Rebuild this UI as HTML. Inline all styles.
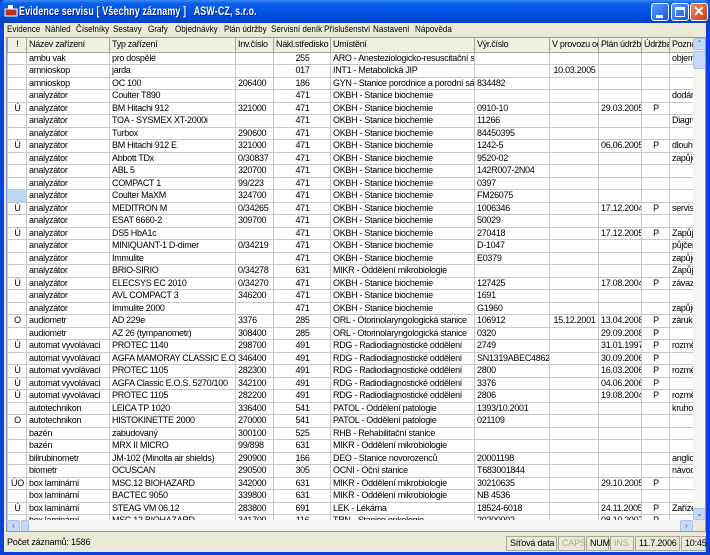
<!DOCTYPE html>
<html><head><meta charset="utf-8">
<style>
*{margin:0;padding:0;box-sizing:border-box}
body{width:710px;height:555px;overflow:hidden;background:#0842d8;font-family:"Liberation Sans",sans-serif;font-size:9px;color:#000;position:relative}
.title{position:absolute;left:0;top:0;width:710px;height:23px;background:linear-gradient(#3a8cf8 0%,#0a5fe8 15%,#0055e5 50%,#0048d0 85%,#0a3fb8 100%);border-radius:6px 6px 0 0}
.title .t{position:absolute;left:19px;top:4px;color:#fff;font-weight:bold;font-size:12px;letter-spacing:0.2px;text-shadow:1px 1px #0a1e80;white-space:pre;transform:scaleX(0.74);transform-origin:left}
.ico{position:absolute;left:4px;top:4px;width:15px;height:14px}
.btn{position:absolute;top:3px;width:18px;height:18px;border:1px solid #fff;border-radius:3px;background:linear-gradient(135deg,#5c9cfc,#1858e0)}
.btn.x{background:linear-gradient(135deg,#e88a6a,#c43c12)}
.frame{position:absolute;left:4px;top:23px;width:702px;height:529px;background:#ece9d8}
.menu{position:absolute;left:0;top:0;height:13px;white-space:nowrap;font-size:9.5px;line-height:13px}
.menu span{position:absolute;top:0;transform:scaleX(0.85);transform-origin:left}
.grid{position:absolute;left:2px;top:14px;width:700px;height:495px;border:1px solid #7f9db9;background:#fff;overflow:hidden}
table{position:absolute;left:0;top:0;border-collapse:collapse;table-layout:fixed;width:686px}
tr{height:12.5px}
td,th{border:1px solid #c8c8c8;height:12.5px;padding:0 1px 0 2px;white-space:nowrap;overflow:hidden;font-weight:normal;text-align:left;font-size:9px;letter-spacing:-0.3px;line-height:11px}
th{height:14px;background:#f1efe2;border-color:#aca899;border-top:none}
tr:first-child{height:14px}
.c{text-align:center}
.sel{background:#b8d8f4}
.vs{position:absolute;left:686px;top:0;width:13px;height:482px;background:#f4f4f0}
.hs{position:absolute;left:0;top:482px;width:686px;height:12px;background:#f4f4f0}
.arr{position:absolute;width:13px;height:12px;background:#c6d8fc;border:1px solid #a8c0f0;border-radius:2px;color:#4d6185;font-size:8px;text-align:center;line-height:10px}
.status{position:absolute;left:0;top:511px;width:702px;height:18px}
.status div{position:absolute;top:2px;height:15px;border:1px solid #aca899;line-height:13px;font-size:9px;letter-spacing:-0.2px;padding:0 3px;white-space:nowrap}
.g{color:#aca899}
</style></head><body>
<div class="title">
<svg class="ico" viewBox="0 0 15 14"><rect x="1" y="5" width="12" height="7" fill="#c03020" stroke="#fff" stroke-width="1"/><rect x="4" y="1" width="5" height="4" fill="#fff"/></svg>
<div class="t">Evidence servisu [ Všechny záznamy ]   ASW-CZ, s.r.o.</div>
<div class="btn" style="left:651px"><div style="position:absolute;left:4px;top:11px;width:7px;height:3px;background:#fff"></div></div>
<div class="btn" style="left:671px"><div style="position:absolute;left:3px;top:3px;width:10px;height:10px;border:1px solid #fff;border-top:3px solid #fff"></div></div>
<div class="btn x" style="left:690px"><div style="position:absolute;left:2px;top:-1px;color:#fff;font-weight:bold;font-size:14px">✕</div></div>
</div>
<div class="frame">
<div class="menu">
<span style="left:3px">Evidence</span><span style="left:41px">Náhled</span><span style="left:72px">Číselníky</span><span style="left:109px">Sestavy</span><span style="left:144px">Grafy</span><span style="left:171px">Objednávky</span><span style="left:220px">Plán údržby</span><span style="left:267px">Servisní deník</span><span style="left:320px">Příslušenství</span><span style="left:369px">Nastavení</span><span style="left:411px">Nápověda</span>
</div>
<div class="grid">
<table>
<colgroup><col style="width:19px"><col style="width:83px"><col style="width:126px"><col style="width:38px"><col style="width:57px"><col style="width:144px"><col style="width:75px"><col style="width:49px"><col style="width:43px"><col style="width:28px"><col style="width:24px"></colgroup>
<tr><th class="c">!</th><th>Název zařízení</th><th>Typ zařízení</th><th>Inv.číslo</th><th>Nákl.středisko</th><th>Umístění</th><th>Výr.číslo</th><th>V provozu od</th><th>Plán údržby</th><th>Údržba</th><th>Poznámka</th></tr>
<tr><td></td><td>ambu vak</td><td>pro dospělé</td><td></td><td class="c">255</td><td>ARO - Anesteziologicko-resuscitační stan</td><td></td><td></td><td></td><td></td><td>objem</td></tr>
<tr><td></td><td>amnioskop</td><td>jarda</td><td></td><td class="c">017</td><td>INT1 - Metabolická JIP</td><td></td><td class="c">10.03.2005</td><td></td><td></td><td></td></tr>
<tr><td></td><td>amnioskop</td><td>OC 100</td><td>206400</td><td class="c">186</td><td>GYN - Stanice porodnice a porodní sál</td><td>834482</td><td></td><td></td><td></td><td></td></tr>
<tr><td></td><td>analyzátor</td><td>Coulter T890</td><td></td><td class="c">471</td><td>OKBH - Stanice biochemie</td><td></td><td></td><td></td><td></td><td>dodán</td></tr>
<tr><td class="c">Ú</td><td>analyzátor</td><td>BM Hitachi 912</td><td>321000</td><td class="c">471</td><td>OKBH - Stanice biochemie</td><td>0910-10</td><td></td><td class="c">29.03.2005</td><td class="c">P</td><td></td></tr>
<tr><td></td><td>analyzátor</td><td>TOA - SYSMEX XT-2000i</td><td></td><td class="c">471</td><td>OKBH - Stanice biochemie</td><td>11266</td><td></td><td></td><td></td><td>Diagn</td></tr>
<tr><td></td><td>analyzátor</td><td>Turbox</td><td>290600</td><td class="c">471</td><td>OKBH - Stanice biochemie</td><td>84450395</td><td></td><td></td><td></td><td></td></tr>
<tr><td class="c">Ú</td><td>analyzátor</td><td>BM Hitachi 912 E</td><td>321000</td><td class="c">471</td><td>OKBH - Stanice biochemie</td><td>1242-5</td><td></td><td class="c">06.06.2005</td><td class="c">P</td><td>dlouho</td></tr>
<tr><td></td><td>analyzátor</td><td>Abbott TDx</td><td>0/30837</td><td class="c">471</td><td>OKBH - Stanice biochemie</td><td>9520-02</td><td></td><td></td><td></td><td>zapůjč</td></tr>
<tr><td></td><td>analyzátor</td><td>ABL 5</td><td>320700</td><td class="c">471</td><td>OKBH - Stanice biochemie</td><td>142R007-2N04</td><td></td><td></td><td></td><td></td></tr>
<tr><td></td><td>analyzátor</td><td>COMPACT 1</td><td>99/223</td><td class="c">471</td><td>OKBH - Stanice biochemie</td><td>0397</td><td></td><td></td><td></td><td></td></tr>
<tr><td class="sel"></td><td>analyzátor</td><td>Coulter MaXM</td><td>324700</td><td class="c">471</td><td>OKBH - Stanice biochemie</td><td>FM26075</td><td></td><td></td><td></td><td></td></tr>
<tr><td class="c">Ú</td><td>analyzátor</td><td>MEDITRON M</td><td>0/34265</td><td class="c">471</td><td>OKBH - Stanice biochemie</td><td>1006346</td><td></td><td class="c">17.12.2004</td><td class="c">P</td><td>servis</td></tr>
<tr><td></td><td>analyzátor</td><td>ESAT 6660-2</td><td>309700</td><td class="c">471</td><td>OKBH - Stanice biochemie</td><td>50029</td><td></td><td></td><td></td><td></td></tr>
<tr><td class="c">Ú</td><td>analyzátor</td><td>DS5 HbA1c</td><td></td><td class="c">471</td><td>OKBH - Stanice biochemie</td><td>270418</td><td></td><td class="c">17.12.2005</td><td class="c">P</td><td>Zapůjč</td></tr>
<tr><td></td><td>analyzátor</td><td>MINIQUANT-1 D-dimer</td><td>0/34219</td><td class="c">471</td><td>OKBH - Stanice biochemie</td><td>D-1047</td><td></td><td></td><td></td><td>půjčen</td></tr>
<tr><td></td><td>analyzátor</td><td>Immulite</td><td></td><td class="c">471</td><td>OKBH - Stanice biochemie</td><td>E0379</td><td></td><td></td><td></td><td>zapůjč</td></tr>
<tr><td></td><td>analyzátor</td><td>BRIO-SIRIO</td><td>0/34278</td><td class="c">631</td><td>MIKR - Oddělení mikrobiologie</td><td></td><td></td><td></td><td></td><td>Zapůjč</td></tr>
<tr><td class="c">Ú</td><td>analyzátor</td><td>ELECSYS EC 2010</td><td>0/34270</td><td class="c">471</td><td>OKBH - Stanice biochemie</td><td>127425</td><td></td><td class="c">17.08.2004</td><td class="c">P</td><td>závaz</td></tr>
<tr><td></td><td>analyzátor</td><td>AVL COMPACT 3</td><td>346200</td><td class="c">471</td><td>OKBH - Stanice biochemie</td><td>1691</td><td></td><td></td><td></td><td></td></tr>
<tr><td></td><td>analyzátor</td><td>Immulite 2000</td><td></td><td class="c">471</td><td>OKBH - Stanice biochemie</td><td>G1960</td><td></td><td></td><td></td><td>zapůjč</td></tr>
<tr><td class="c">O</td><td>audiometr</td><td>AD 229e</td><td>3376</td><td class="c">285</td><td>ORL - Otorinolaryngologická stanice</td><td>106912</td><td class="c">15.12.2001</td><td class="c">13.04.2008</td><td class="c">P</td><td>záruka</td></tr>
<tr><td></td><td>audiometr</td><td>AZ 26 (tympanometr)</td><td>308400</td><td class="c">285</td><td>ORL - Otorinolaryngologická stanice</td><td>0320</td><td></td><td class="c">29.09.2008</td><td class="c">P</td><td></td></tr>
<tr><td class="c">Ú</td><td>automat vyvolávací</td><td>PROTEC 1140</td><td>298700</td><td class="c">491</td><td>RDG - Radiodiagnostické oddělení</td><td>2749</td><td></td><td class="c">31.01.1997</td><td class="c">P</td><td>rozmě</td></tr>
<tr><td></td><td>automat vyvolávací</td><td>AGFA MAMORAY CLASSIC E.O.S</td><td>346400</td><td class="c">491</td><td>RDG - Radiodiagnostické oddělení</td><td>SN1319ABEC48621</td><td></td><td class="c">30.09.2006</td><td class="c">P</td><td></td></tr>
<tr><td class="c">Ú</td><td>automat vyvolávací</td><td>PROTEC 1105</td><td>282300</td><td class="c">491</td><td>RDG - Radiodiagnostické oddělení</td><td>2800</td><td></td><td class="c">16.03.2006</td><td class="c">P</td><td>rozmě</td></tr>
<tr><td class="c">Ú</td><td>automat vyvolávací</td><td>AGFA Classic E.O.S. 5270/100</td><td>342100</td><td class="c">491</td><td>RDG - Radiodiagnostické oddělení</td><td>3376</td><td></td><td class="c">04.06.2006</td><td class="c">P</td><td></td></tr>
<tr><td class="c">Ú</td><td>automat vyvolávací</td><td>PROTEC 1105</td><td>282200</td><td class="c">491</td><td>RDG - Radiodiagnostické oddělení</td><td>2806</td><td></td><td class="c">19.08.2004</td><td class="c">P</td><td>rozmě</td></tr>
<tr><td></td><td>autotechnikon</td><td>LEICA TP 1020</td><td>336400</td><td class="c">541</td><td>PATOL - Oddělení patologie</td><td>1393/10.2001</td><td></td><td></td><td></td><td>kruhov</td></tr>
<tr><td class="c">O</td><td>autotechnikon</td><td>HISTOKINETTE 2000</td><td>270000</td><td class="c">541</td><td>PATOL - Oddělení patologie</td><td>021109</td><td></td><td></td><td></td><td></td></tr>
<tr><td></td><td>bazén</td><td>zabudovaný</td><td>300100</td><td class="c">525</td><td>RHB - Rehabilitační stanice</td><td></td><td></td><td></td><td></td><td></td></tr>
<tr><td></td><td>bazén</td><td>MRX II MICRO</td><td>99/898</td><td class="c">631</td><td>MIKR - Oddělení mikrobiologie</td><td></td><td></td><td></td><td></td><td></td></tr>
<tr><td></td><td>bilirubinometr</td><td>JM-102 (Minolta air shields)</td><td>290900</td><td class="c">166</td><td>DEO - Stanice novorozenců</td><td>20001198</td><td></td><td></td><td></td><td>anglic</td></tr>
<tr><td></td><td>biometr</td><td>OCUSCAN</td><td>290500</td><td class="c">305</td><td>OCNI - Oční stanice</td><td>T683001844</td><td></td><td></td><td></td><td>návod</td></tr>
<tr><td class="c">ÚO</td><td>box laminární</td><td>MSC.12 BIOHAZARD</td><td>342000</td><td class="c">631</td><td>MIKR - Oddělení mikrobiologie</td><td>30210635</td><td></td><td class="c">29.10.2005</td><td class="c">P</td><td></td></tr>
<tr><td></td><td>box laminární</td><td>BACTEC 9050</td><td>339800</td><td class="c">631</td><td>MIKR - Oddělení mikrobiologie</td><td>NB 4536</td><td></td><td></td><td></td><td></td></tr>
<tr><td class="c">Ú</td><td>box laminární</td><td>STEAG VM 06.12</td><td>283800</td><td class="c">691</td><td>LEK - Lékárna</td><td>18524-6018</td><td></td><td class="c">24.11.2005</td><td class="c">P</td><td>Zaříze</td></tr>
<tr><td></td><td>box laminární</td><td>MSC.12 BIOHAZARD</td><td>341700</td><td class="c">116</td><td>TRN - Stanice onkologie</td><td>20200002</td><td></td><td class="c">08.10.2007</td><td class="c">P</td><td></td></tr>
</table>
<div class="vs">
<div class="arr" style="left:0;top:0">⌃</div>
<div class="arr" style="left:0;top:13px;height:18px"></div>
<div class="arr" style="left:0;top:470px">⌄</div>
</div>
<div class="hs">
<div class="arr" style="left:0;top:0">‹</div>
<div class="arr" style="left:14px;top:0;width:8px"></div>
<div class="arr" style="left:673px;top:0">›</div>
</div>
<div style="position:absolute;left:686px;top:482px;width:13px;height:12px;background:#ece9d8"></div>
</div>
<div class="status">
<div style="left:0;width:500px;border:none">Počet záznamů: 1586</div>
<div style="left:502px;width:51px">Síťová data</div>
<div style="left:554px;width:27px" class="g">CAPS</div>
<div style="left:582px;width:23px">NUM</div>
<div style="left:606px;width:24px" class="g">INS</div>
<div style="left:631px;width:45px">11.7.2006</div>
<div style="left:677px;width:25px">10:45</div>
</div>
</div>
</body></html>
